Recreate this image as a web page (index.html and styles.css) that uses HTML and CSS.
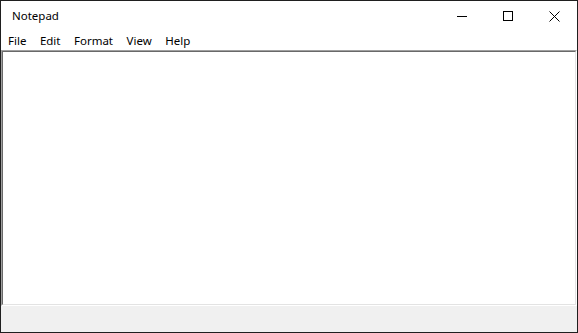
FILE: index.html
```html
<!DOCTYPE html>
<html>
<head>
<meta charset="utf-8">
<title>Notepad</title>
<link rel="stylesheet" href="styles.css">
</head>
<body>
<div class="window">
  <div class="titlebar">
    <span class="title">Notepad</span>
    <div class="controls">
      <div class="ctl">
        <svg width="10" height="10" viewBox="0 0 10 10"><path d="M0 5.5H10" stroke="#000" stroke-width="1"/></svg>
      </div>
      <div class="ctl">
        <svg width="10" height="10" viewBox="0 0 10 10"><rect x="0.5" y="0.5" width="9" height="9" fill="none" stroke="#000" stroke-width="1"/></svg>
      </div>
      <div class="ctl">
        <svg width="11" height="11" viewBox="0 0 11 11"><path d="M0.5 0.5L10.5 10.5M10.5 0.5L0.5 10.5" stroke="#000" stroke-width="1"/></svg>
      </div>
    </div>
  </div>
  <div class="menubar">
    <span class="menu">File</span>
    <span class="menu">Edit</span>
    <span class="menu">Format</span>
    <span class="menu">View</span>
    <span class="menu">Help</span>
  </div>
  <div class="edit-outer">
    <div class="edit-inner"></div>
  </div>
  <div class="statusbar"></div>
</div>
</body>
</html>
```
FILE: styles.css
```css
html, body {
  margin: 0;
  padding: 0;
  background: #fff;
}
.window {
  box-sizing: border-box;
  width: 578px;
  height: 333px;
  border: 1px solid #1f1f1f;
  display: flex;
  flex-direction: column;
  font-family: "Noto Sans", "Open Sans", sans-serif;
  font-size: 11.5px;
  color: #000;
  background: #fff;
}
.titlebar {
  height: 30px;
  display: flex;
  align-items: center;
  justify-content: space-between;
}
.title {
  padding-left: 11px;
  line-height: 16px;
}
.controls {
  display: flex;
  height: 30px;
}
.ctl {
  width: 46px;
  height: 30px;
  display: flex;
  align-items: center;
  justify-content: center;
}
.menubar {
  height: 19px;
  display: flex;
  align-items: center;
  gap: 13.5px;
  padding-left: 7px;
}
.menu {
  line-height: 16px;
}
.edit-outer {
  height: 256px;
  box-sizing: border-box;
  border-top: 1px solid #a0a0a0;
  border-left: 1px solid #a0a0a0;
  border-right: 1px solid #ffffff;
  border-bottom: 1px solid #ffffff;
  display: flex;
}
.edit-inner {
  flex: 1;
  border-top: 1px solid #696969;
  border-left: 1px solid #696969;
  border-right: 1px solid #e3e3e3;
  border-bottom: 1px solid #e3e3e3;
  background: #fff;
}
.statusbar {
  flex: 1;
  background: #f0f0f0;
}
```
